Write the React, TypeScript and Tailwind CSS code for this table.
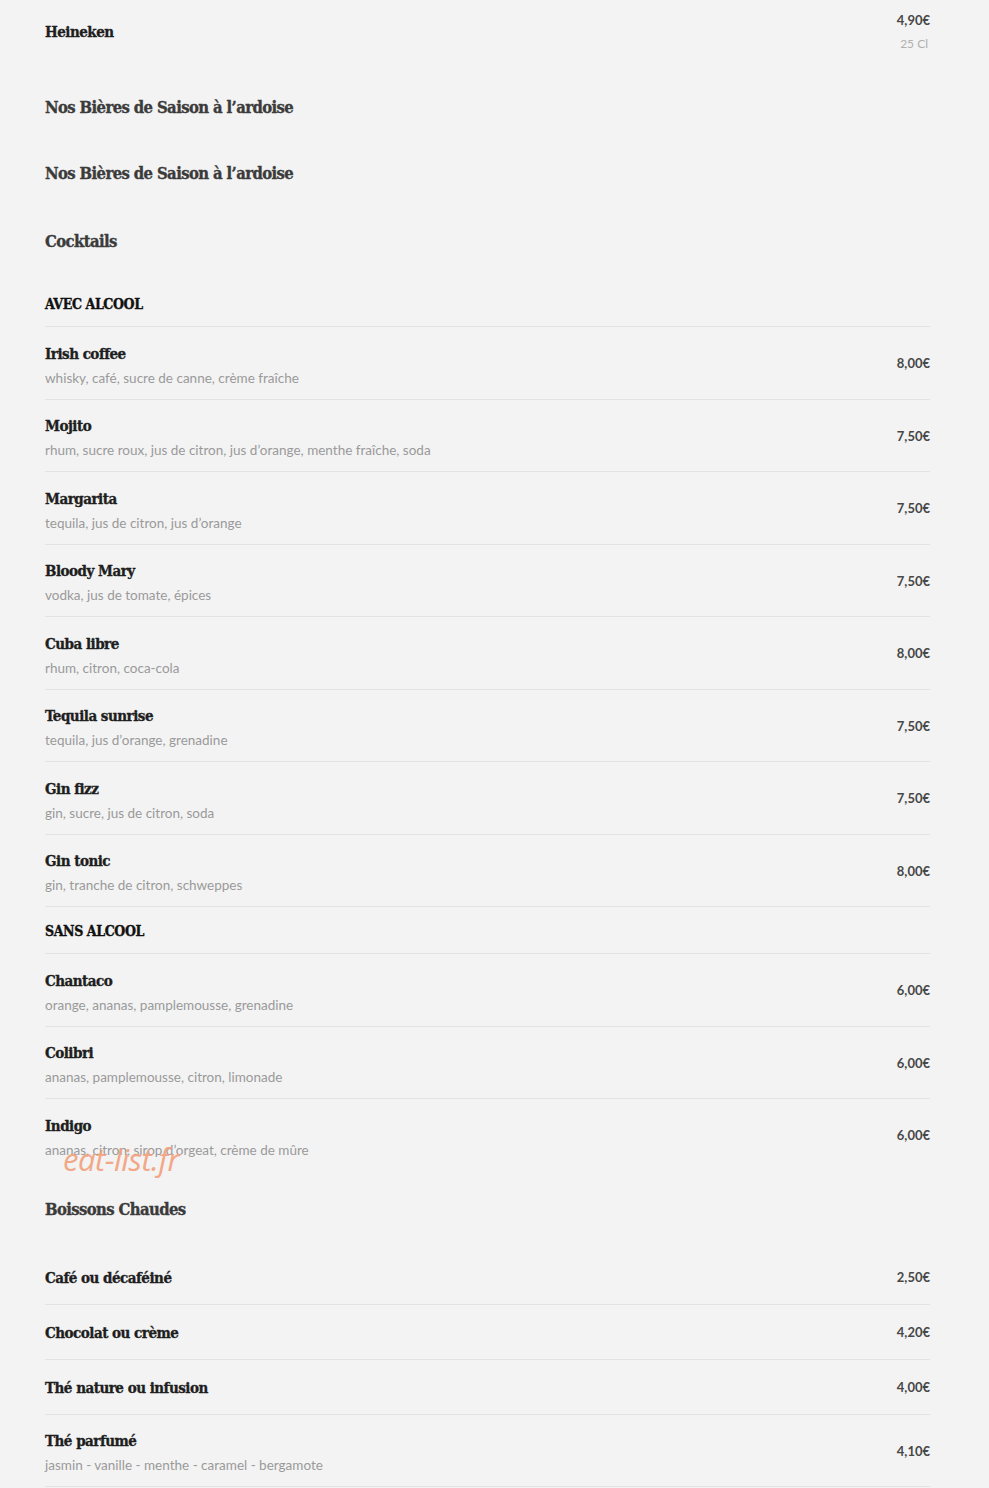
import React from "react";

const serif =
  "font-['DejaVu_Serif_Condensed','Liberation_Serif',serif] font-bold [-webkit-text-stroke:0.35px_currentColor]";
const sans = "font-['Lato',sans-serif]";

type Item = { name: string; desc?: string; price: string };

const avec: Item[] = [
  { name: "Irish coffee", desc: "whisky, café, sucre de canne, crème fraîche", price: "8,00€" },
  { name: "Mojito", desc: "rhum, sucre roux, jus de citron, jus d’orange, menthe fraîche, soda", price: "7,50€" },
  { name: "Margarita", desc: "tequila, jus de citron, jus d’orange", price: "7,50€" },
  { name: "Bloody Mary", desc: "vodka, jus de tomate, épices", price: "7,50€" },
  { name: "Cuba libre", desc: "rhum, citron, coca-cola", price: "8,00€" },
  { name: "Tequila sunrise", desc: "tequila, jus d’orange, grenadine", price: "7,50€" },
  { name: "Gin fizz", desc: "gin, sucre, jus de citron, soda", price: "7,50€" },
  { name: "Gin tonic", desc: "gin, tranche de citron, schweppes", price: "8,00€" },
];

const sans_: Item[] = [
  { name: "Chantaco", desc: "orange, ananas, pamplemousse, grenadine", price: "6,00€" },
  { name: "Colibri", desc: "ananas, pamplemousse, citron, limonade", price: "6,00€" },
  { name: "Indigo", desc: "ananas, citron, sirop d’orgeat, crème de mûre", price: "6,00€" },
];

const chaudes: Item[] = [
  { name: "Café ou décaféiné", price: "2,50€" },
  { name: "Chocolat ou crème", price: "4,20€" },
  { name: "Thé nature ou infusion", price: "4,00€" },
  { name: "Thé parfumé", desc: "jasmin - vanille - menthe - caramel - bergamote", price: "4,10€" },
];

function Row({ item, border = true }: { item: Item; border?: boolean }) {
  return (
    <div
      className={`flex items-center justify-between ${border ? "border-b border-[#e3e3e3]" : ""} ${
        item.desc ? "pt-[16.5px] pb-[11px]" : "h-[55px] pt-[2px]"
      }`}
    >
      <div className="flex flex-col gap-[4px]">
        <div className={`${serif} text-[15px] leading-[20px] text-[#1e1e1e] tracking-[-0.5px]`}>{item.name}</div>
        {item.desc && <div className={`${sans} text-[13.5px] leading-[20px] text-[#9a9a9a]`}>{item.desc}</div>}
      </div>
      <div className={`${sans} text-[13px] font-bold text-[#474747] ${item.desc ? "mb-[3px]" : ""}`}>{item.price}</div>
    </div>
  );
}

function Sub({ label }: { label: string }) {
  return (
    <div className="flex h-[47px] items-center border-b border-[#e3e3e3] pt-[2px]">
      <span className={`${serif} text-[14px] text-[#111] tracking-[-0.4px]`}>{label}</span>
    </div>
  );
}

function Heading({ label, className }: { label: string; className: string }) {
  return (
    <div className={`${serif} text-[16.5px] leading-[26px] text-[#3b3b3b] tracking-[-0.6px] ${className}`}>{label}</div>
  );
}

export default function App() {
  return (
    <div className="relative min-h-[1488px] w-[989px] bg-[#f3f3f3]">
      <div className="ml-[45px] w-[885px]">
        <div className="flex h-[63px] items-center justify-between pt-[1px]">
          <div className={`${serif} text-[15px] text-[#1e1e1e] tracking-[-0.5px]`}>Heineken</div>
          <div className="flex flex-col items-end">
            <div className={`${sans} text-[13px] leading-[24px] font-bold text-[#474747]`}>4,90€</div>
            <div className={`${sans} text-[12px] leading-[24px] text-[#b0b0b0] pr-[2px]`}>25 Cl</div>
          </div>
        </div>
        <Heading label="Nos Bières de Saison à l’ardoise" className="mt-[32px]" />
        <Heading label="Nos Bières de Saison à l’ardoise" className="mt-[40px]" />
        <Heading label="Cocktails" className="mt-[42px]" />
        <div className="mt-[25px]">
          <Sub label="AVEC ALCOOL" />
          {avec.map((it) => (
            <Row key={it.name} item={it} />
          ))}
          <Sub label="SANS ALCOOL" />
          {sans_.map((it, i) => (
            <Row key={it.name} item={it} border={i < sans_.length - 1} />
          ))}
        </div>
        <Heading label="Boissons Chaudes" className="mt-[26px]" />
        <div className="mt-[27px]">
          {chaudes.map((it) => (
            <Row key={it.name} item={it} />
          ))}
        </div>
      </div>
      <div className="absolute left-[63px] top-[1139px] font-['Open_Sans',sans-serif] italic text-[31px] leading-[40px] text-[#f2a07c] opacity-90 tracking-[-0.5px]">
        eat-list.fr
      </div>
    </div>
  );
}
